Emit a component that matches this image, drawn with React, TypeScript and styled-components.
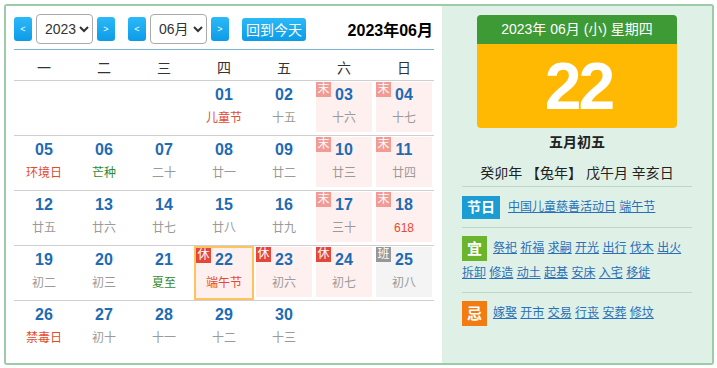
import React from 'react';
import styled, { createGlobalStyle, css } from 'styled-components';

const FONT = `"Liberation Sans", "Noto Sans CJK SC", sans-serif`;

const GlobalStyle = createGlobalStyle`
  html, body { margin: 0; padding: 0; background: #fff; }
  body { font-family: ${FONT}; color: #222; }
`;

const Frame = styled.div`
  box-sizing: border-box;
  width: 710px;
  height: 361px;
  margin: 4px 0 0 4px;
  border: 2px solid #9dcaa7;
  border-radius: 3px;
  display: flex;
  overflow: hidden;
`;

const Left = styled.div`
  width: 436px;
  box-sizing: border-box;
  padding: 8px 8px 0;
  background: #fff;
`;

const Toolbar = styled.div`
  display: flex;
  align-items: center;
  height: 30px;
  gap: 4px;
`;

const NavBtn = styled.button<{ $gap?: boolean }>`
  width: 18px;
  height: 24px;
  padding: 0;
  border: none;
  border-radius: 3px;
  background: linear-gradient(#2cb9f8, #0c9be7);
  color: #fff;
  font: 9px ${FONT};
  margin-left: ${(p) => (p.$gap ? '9px' : '0')};
`;

const Select = styled.select`
  width: 57px;
  height: 30px;
  box-sizing: border-box;
  border: 1px solid #aaa;
  border-radius: 4px;
  font: 14px ${FONT};
  color: #333;
  padding: 0 0 0 4px;
  background: #fff;
`;

const TodayBtn = styled.button`
  height: 23px;
  padding: 0 4px;
  margin-left: 9px;
  border: none;
  border-radius: 3px;
  background: linear-gradient(#2cb9f8, #0c9be7);
  color: #fff;
  font: 14px ${FONT};
`;

const Title = styled.div`
  margin-left: auto;
  padding-right: 1px;
  font: bold 16px ${FONT};
  color: #000;
`;

const Table = styled.div`
  margin-top: 5px;
  width: 420px;
  border-top: 1px solid #7ab4d9;
`;

const WeekHead = styled.div`
  display: grid;
  grid-template-columns: repeat(7, 60px);
  height: 30px;
  box-sizing: border-box;
  padding-top: 3px;
  align-items: center;
  text-align: center;
  font-size: 14px;
  color: #333;
`;

const Row = styled.div`
  display: grid;
  grid-template-columns: repeat(7, 60px);
  height: 55px;
  box-sizing: border-box;
  border-top: 1px solid #cfcfcf;
`;

type Tone = 'plain' | 'weekend' | 'work';

const Cell = styled.div<{ $tone: Tone; $selected?: boolean }>`
  position: relative;
  box-sizing: border-box;
  width: 56px;
  height: 50px;
  margin: 1px 2px 0;
  padding-top: 4px;
  text-align: center;
  background: ${(p) =>
    p.$tone === 'weekend' ? '#fff0f0' : p.$tone === 'work' ? '#f4f4f4' : 'transparent'};
  ${(p) =>
    p.$selected &&
    css`
      width: 60px;
      height: 54px;
      margin: 0;
      padding-top: 3px;
      border: 2px solid #fbc45c;
    `}
`;

type BadgeKind = 'end' | 'rest' | 'work';

const DayBadge = styled.span<{ $kind: BadgeKind }>`
  position: absolute;
  top: 0;
  left: 0;
  width: 15px;
  height: 15px;
  line-height: 15px;
  font-size: 12px;
  color: #fff;
  text-align: center;
  background: ${(p) =>
    p.$kind === 'end' ? '#f19b94' : p.$kind === 'rest' ? '#e4463a' : '#979797'};
`;

const DayNum = styled.div`
  font: bold 16px/18px ${FONT};
  color: #1e6bb3;
`;

type LunarKind = 'lunar' | 'fest' | 'term';

const Lunar = styled.div<{ $kind: LunarKind }>`
  margin-top: 5px;
  font-size: 12px;
  line-height: 18px;
  color: ${(p) => (p.$kind === 'fest' ? '#e54a2e' : p.$kind === 'term' ? '#2f8a2f' : '#9a9a9a')};
`;

const Right = styled.div`
  flex: 1;
  background: #dff1e7;
  padding: 9px 20px 0;
  box-sizing: border-box;
`;

const DateCard = styled.div`
  width: 200px;
  margin: 0 auto;
  border-radius: 4px;
  overflow: hidden;
`;

const CardHead = styled.div`
  height: 29px;
  line-height: 29px;
  background: #3e9a35;
  color: #fff;
  font-size: 14px;
  text-align: center;
`;

const CardDay = styled.div`
  height: 84px;
  background: #ffb902;
  color: #fff;
  font: bold 66px/84px ${FONT};
  letter-spacing: -3px;
  padding-left: 3px;
  text-align: center;
`;

const LunarDate = styled.div`
  margin-top: 4px;
  text-align: center;
  font-weight: bold;
  font-size: 14px;
  line-height: 20px;
  color: #222;
`;

const GanZhi = styled.div`
  margin-top: 11px;
  text-align: center;
  font-size: 14px;
  line-height: 20px;
  color: #222;
`;

const Section = styled.div<{ $first?: boolean; $lh: number }>`
  display: flow-root;
  border-top: 1px solid #bcd7c6;
  margin-top: ${(p) => (p.$first ? '3px' : '0')};
  padding: 8px 0 6px;
  line-height: ${(p) => p.$lh}px;
  font-size: 12px;
  ${(p) => p.$first && css`padding: 9px 0 8px;`}
`;

type TagKind = 'fest' | 'yi' | 'ji';

const Tag = styled.span<{ $kind: TagKind }>`
  float: left;
  height: ${(p) => (p.$kind === 'fest' ? 23 : 25)}px;
  line-height: ${(p) => (p.$kind === 'fest' ? 23 : 25)}px;
  width: ${(p) => (p.$kind === 'fest' ? 38 : 25)}px;
  margin-right: ${(p) => (p.$kind === 'fest' ? 8 : 6)}px;
  text-align: center;
  color: #fff;
  font-weight: bold;
  font-size: ${(p) => (p.$kind === 'fest' ? 14 : 15)}px;
  background: ${(p) => (p.$kind === 'fest' ? '#1b9dd3' : p.$kind === 'yi' ? '#6bb52c' : '#f27b12')};
`;

const Link = styled.a`
  color: #2a6fb8;
  text-decoration: underline;
  font-size: 12px;
`;

type Day = {
  d: string;
  text: string;
  kind: LunarKind;
  tone?: Tone;
  badge?: BadgeKind;
  selected?: boolean;
};

const days: (Day | null)[] = [
  null, null, null,
  { d: '01', text: '儿童节', kind: 'fest' },
  { d: '02', text: '十五', kind: 'lunar' },
  { d: '03', text: '十六', kind: 'lunar', tone: 'weekend', badge: 'end' },
  { d: '04', text: '十七', kind: 'lunar', tone: 'weekend', badge: 'end' },
  { d: '05', text: '环境日', kind: 'fest' },
  { d: '06', text: '芒种', kind: 'term' },
  { d: '07', text: '二十', kind: 'lunar' },
  { d: '08', text: '廿一', kind: 'lunar' },
  { d: '09', text: '廿二', kind: 'lunar' },
  { d: '10', text: '廿三', kind: 'lunar', tone: 'weekend', badge: 'end' },
  { d: '11', text: '廿四', kind: 'lunar', tone: 'weekend', badge: 'end' },
  { d: '12', text: '廿五', kind: 'lunar' },
  { d: '13', text: '廿六', kind: 'lunar' },
  { d: '14', text: '廿七', kind: 'lunar' },
  { d: '15', text: '廿八', kind: 'lunar' },
  { d: '16', text: '廿九', kind: 'lunar' },
  { d: '17', text: '三十', kind: 'lunar', tone: 'weekend', badge: 'end' },
  { d: '18', text: '618', kind: 'fest', tone: 'weekend', badge: 'end' },
  { d: '19', text: '初二', kind: 'lunar' },
  { d: '20', text: '初三', kind: 'lunar' },
  { d: '21', text: '夏至', kind: 'term' },
  { d: '22', text: '端午节', kind: 'fest', tone: 'weekend', badge: 'rest', selected: true },
  { d: '23', text: '初六', kind: 'lunar', tone: 'weekend', badge: 'rest' },
  { d: '24', text: '初七', kind: 'lunar', tone: 'weekend', badge: 'rest' },
  { d: '25', text: '初八', kind: 'lunar', tone: 'work', badge: 'work' },
  { d: '26', text: '禁毒日', kind: 'fest' },
  { d: '27', text: '初十', kind: 'lunar' },
  { d: '28', text: '十一', kind: 'lunar' },
  { d: '29', text: '十二', kind: 'lunar' },
  { d: '30', text: '十三', kind: 'lunar' },
];

const badgeText: Record<BadgeKind, string> = { end: '末', rest: '休', work: '班' };

const weeks: (Day | null)[][] = [];
for (let i = 0; i < days.length; i += 7) weeks.push(days.slice(i, i + 7));

const yi = ['祭祀', '祈福', '求嗣', '开光', '出行', '伐木', '出火', '拆卸', '修造', '动土', '起基', '安床', '入宅', '移徙'];
const ji = ['嫁娶', '开市', '交易', '行丧', '安葬', '修坟'];

const LinkList = ({ items }: { items: string[] }) => (
  <>
    {items.map((t, i) => (
      <React.Fragment key={t}>
        {i > 0 && ' '}
        <Link href="#">{t}</Link>
      </React.Fragment>
    ))}
  </>
);

export default function App() {
  return (
    <>
      <GlobalStyle />
      <Frame>
        <Left>
          <Toolbar>
            <NavBtn>&lt;</NavBtn>
            <Select defaultValue="2023">
              <option value="2023">2023</option>
            </Select>
            <NavBtn>&gt;</NavBtn>
            <NavBtn $gap>&lt;</NavBtn>
            <Select defaultValue="06">
              <option value="06">06月</option>
            </Select>
            <NavBtn>&gt;</NavBtn>
            <TodayBtn>回到今天</TodayBtn>
            <Title>2023年06月</Title>
          </Toolbar>
          <Table>
            <WeekHead>
              {['一', '二', '三', '四', '五', '六', '日'].map((w) => (
                <div key={w}>{w}</div>
              ))}
            </WeekHead>
            {weeks.map((wk, ri) => (
              <Row key={ri}>
                {wk.map((day, ci) =>
                  day ? (
                    <Cell key={ci} $tone={day.tone ?? 'plain'} $selected={day.selected}>
                      {day.badge && <DayBadge $kind={day.badge}>{badgeText[day.badge]}</DayBadge>}
                      <DayNum>{day.d}</DayNum>
                      <Lunar $kind={day.kind}>{day.text}</Lunar>
                    </Cell>
                  ) : (
                    <div key={ci} />
                  )
                )}
              </Row>
            ))}
          </Table>
        </Left>
        <Right>
          <DateCard>
            <CardHead>2023年 06月 (小) 星期四</CardHead>
            <CardDay>22</CardDay>
          </DateCard>
          <LunarDate>五月初五</LunarDate>
          <GanZhi>癸卯年 【兔年】 戊午月 辛亥日</GanZhi>
          <Section $first $lh={23}>
            <Tag $kind="fest">节日</Tag>
            <LinkList items={['中国儿童慈善活动日', '端午节']} />
          </Section>
          <Section $lh={25}>
            <Tag $kind="yi">宜</Tag>
            <LinkList items={yi} />
          </Section>
          <Section $lh={25}>
            <Tag $kind="ji">忌</Tag>
            <LinkList items={ji} />
          </Section>
        </Right>
      </Frame>
    </>
  );
}
